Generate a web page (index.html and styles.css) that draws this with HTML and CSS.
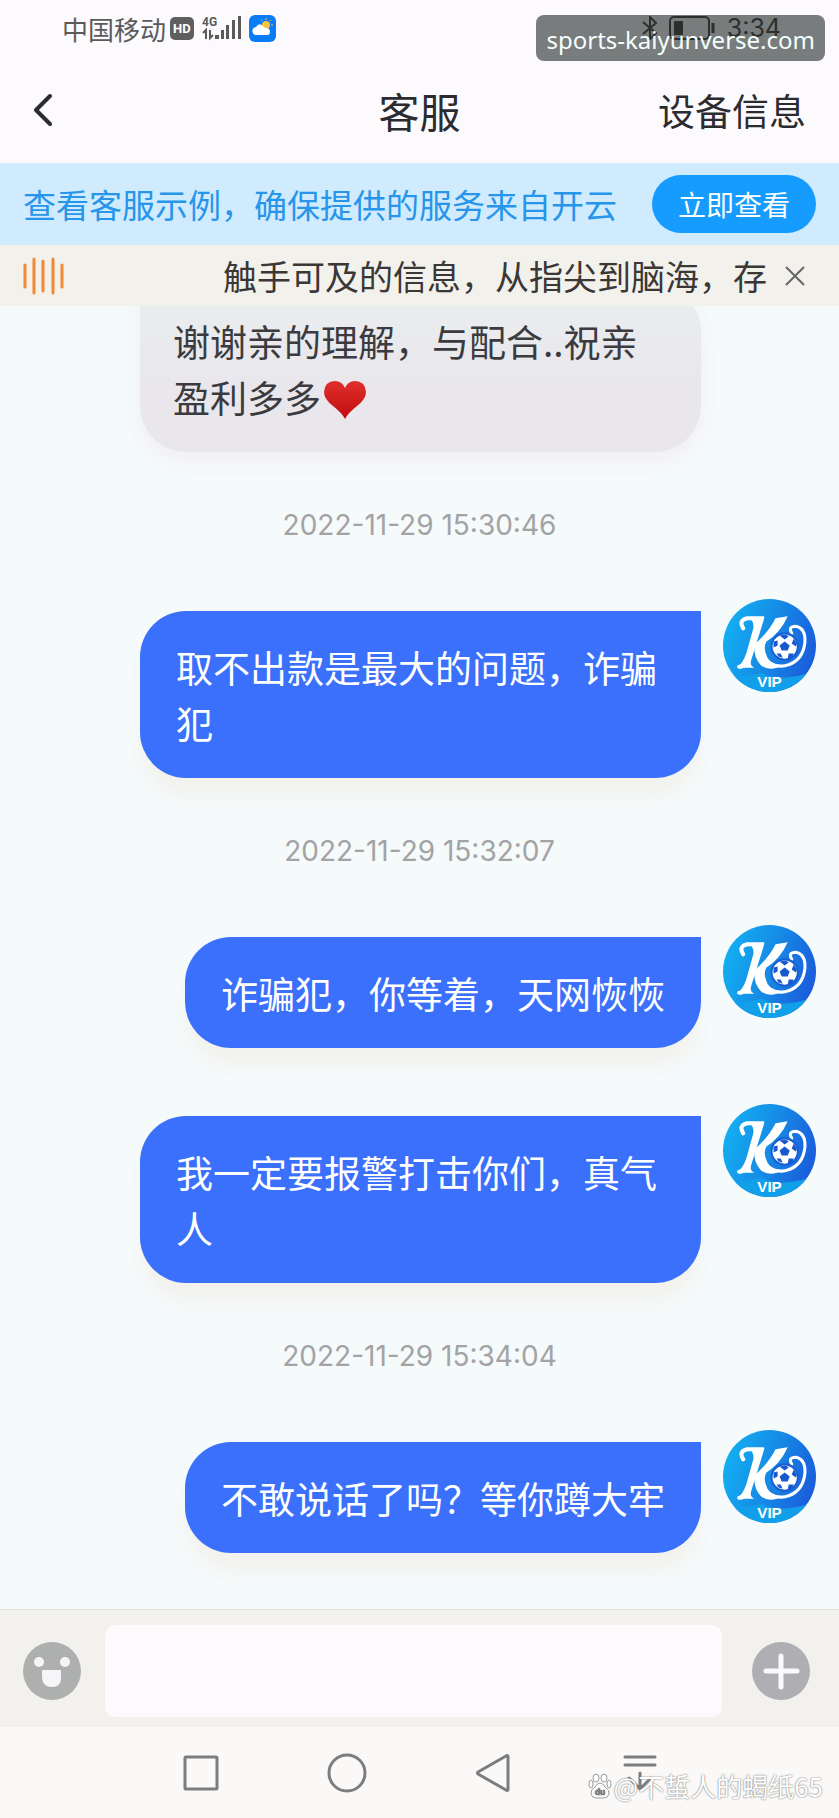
FILE: index.html
```html
<!DOCTYPE html>
<html lang="zh-CN">
<head>
    <meta charset="utf-8">
    <title>客服</title>
    <meta name="viewport" content="width=device-width, initial-scale=1">
    <link rel="stylesheet" href="styles.css">
</head>
<body>
    <!-- shared avatar, reused by every message -->
    <svg class="sprite" aria-hidden="true">
        <defs>
            <linearGradient id="disc" x1="0" y1="0.3" x2="1" y2="0.6">
                <stop offset="0" stop-color="#13b0f2"></stop>
                <stop offset="0.5" stop-color="#168be6"></stop>
                <stop offset="1" stop-color="#1a5bdb"></stop>
            </linearGradient>
            <clipPath id="disc-clip"><circle cx="46" cy="46" r="46"></circle></clipPath>
            <symbol id="avatar" viewBox="0 0 92 92">
                <circle cx="46" cy="46" r="46" fill="url(#disc)"></circle>
                <path d="M6 76Q22 78 38 73Q56 82 82 74V92H6Z" fill="#129fea" clip-path="url(#disc-clip)"></path>
                <path d="M20 29Q15 21 24 19L38 19Q32 37 27 53Q23 67 16 67" fill="none" stroke="#fff" stroke-width="4" stroke-linecap="round"></path>
                <path d="M26 18H41Q37 32 32 47L28 60Q26 66 31 68H14Q20 63 23 54L30 29Q31 23 26 18Z" fill="#fff"></path>
                <path d="M31 45Q45 33 52 19L64 17Q57 33 43 42Q39 48 44 58Q49 66 60 65Q46 73 37 65Q30 57 31 45Z" fill="#fff"></path>
                <path d="M68 34Q64 27 72 27Q82 29 81 43Q79 60 65 65Q56 69 46 63" fill="none" stroke="#fff" stroke-width="3" stroke-linecap="round"></path>
                <circle cx="61" cy="47" r="13" fill="#fff" stroke="#175fd2" stroke-width="2"></circle>
                <g fill="#1659cf">
                    <path d="M61 42l5 4-2 5h-6l-2-5z"></path>
                    <path d="M56 36l6-1 3 2-4 3zM70 39l3 5-1 3-4-3zM50 42l4-1 0 5-4 2zM53 54l4 0 2 4-4-1zM65 54l5 0-2 4-4 1z"></path>
                </g>
                <text x="46" y="87" class="vip">VIP</text>
            </symbol>
        </defs>
    </svg>

    <div class="statusbar">
        <span class="carrier">中国移动</span>
        <span class="hd">HD</span>
        <svg class="signal" width="39" height="26" viewBox="0 0 39 26">
            <text x="0" y="11" class="net">4G</text>
            <path d="M1 18l3-3v9M8 15v8l3-3" fill="none" stroke="#5a5a5a" stroke-width="2"></path>
            <path d="M13 20h4v4h-4zM19 15h3v9h-3zM24 10h3v14h-3zM30 5h3v19h-3zM36 1h3v23h-3z" fill="#5a5a5a"></path>
        </svg>
        <svg width="27" height="27" viewBox="0 0 27 27">
            <rect width="27" height="27" rx="6" fill="#0b7cf7"></rect>
            <circle cx="17" cy="10" r="4" fill="#fbc13d"></circle>
            <path d="M17 3v2M22 5l-1 1M24 10h-2M12 5l1 1" stroke="#fbc13d" stroke-width="1"></path>
            <path d="M8 20a4 4 0 0 1-1-8q3-5 7-1 1 2 3 2 4 0 4 4 0 3-3 3z" fill="#fff"></path>
        </svg>
        <div class="status-right">
            <svg width="18" height="24" viewBox="0 0 18 24" fill="none" stroke="#5a5a5a" stroke-width="2">
                <path d="M2 6l13 11-6 6V1l6 6L2 18"></path>
            </svg>
            <svg width="48" height="26" viewBox="0 0 48 26">
                <rect x="1" y="2" width="39" height="22" rx="4" fill="none" stroke="#5a5a5a" stroke-width="2"></rect>
                <rect x="5" y="6" width="9" height="14" rx="1" fill="#5a5a5a"></rect>
                <path d="M44 8v10" stroke="#5a5a5a" stroke-width="3"></path>
            </svg>
            <span class="clock">3:34</span>
        </div>
        <div class="site-tag">sports-kaiyunverse.com</div>
    </div>

    <header class="header">
        <button class="back" type="button" aria-label="返回">
            <svg width="20" height="34" viewBox="0 0 20 34">
                <path d="M17 3L3 17l14 14" fill="none" stroke="#2b2b30" stroke-width="4" stroke-linecap="round" stroke-linejoin="round"></path>
            </svg>
        </button>
        <h1>客服</h1>
        <a class="device" href="#">设备信息</a>
    </header>

    <div class="banner">
        <span>查看客服示例，确保提供的服务来自开云</span>
        <button type="button">立即查看</button>
    </div>

    <div class="notice">
        <svg width="41" height="38" viewBox="0 0 41 38" stroke="#f08a35" stroke-width="3" stroke-linecap="round">
            <path d="M2 8v22M11 2v34M20 4v30M30 2v34M39 8v22"></path>
        </svg>
        <p>触手可及的信息，从指尖到脑海，存</p>
        <button type="button" aria-label="关闭">
            <svg width="20" height="20" viewBox="0 0 20 20">
                <path d="M1 1l18 18M19 1L1 19" stroke="#666" stroke-width="2"></path>
            </svg>
        </button>
    </div>

    <main class="chat">
        <div class="message received">
            <p class="bubble">谢谢亲的理解，与配合..祝亲盈利多多<svg class="heart" width="42" height="38" viewBox="0 0 42 38">
                <defs>
                    <linearGradient id="red" x1="0" y1="0" x2="0" y2="1">
                        <stop offset="0" stop-color="#df2f2b"></stop>
                        <stop offset="1" stop-color="#c20c10"></stop>
                    </linearGradient>
                </defs>
                <path d="M21 38Q18 32 9 25 0 18 0 11 1 0 11 0 18 0 21 7 24 0 31 0 41 0 42 11 42 18 33 25 24 32 21 38Z" fill="url(#red)"></path>
            </svg></p>
        </div>

        <time>2022-11-29 15:30:46</time>
        <div class="message">
            <p class="bubble">取不出款是最大的问题，诈骗犯</p>
            <svg class="avatar"><use href="#avatar"></use></svg>
        </div>

        <time>2022-11-29 15:32:07</time>
        <div class="message">
            <p class="bubble">诈骗犯，你等着，天网恢恢</p>
            <svg class="avatar"><use href="#avatar"></use></svg>
        </div>
        <div class="message">
            <p class="bubble">我一定要报警打击你们，真气人</p>
            <svg class="avatar"><use href="#avatar"></use></svg>
        </div>

        <time>2022-11-29 15:34:04</time>
        <div class="message">
            <p class="bubble">不敢说话了吗？等你蹲大牢</p>
            <svg class="avatar"><use href="#avatar"></use></svg>
        </div>
    </main>

    <form class="composer">
        <button type="button" aria-label="表情">
            <svg width="58" height="58" viewBox="0 0 58 58">
                <circle cx="29" cy="29" r="29" fill="#aeb0b0"></circle>
                <circle cx="16" cy="20" r="5" fill="#f7f5f8"></circle>
                <circle cx="42" cy="20" r="5" fill="#f7f5f8"></circle>
                <path d="M19 28h19v8q0 9-9 9t-10-9z" fill="#f7f5f8"></path>
            </svg>
        </button>
        <input type="text" aria-label="消息">
        <button type="button" aria-label="更多">
            <svg width="58" height="58" viewBox="0 0 58 58">
                <circle cx="29" cy="29" r="29" fill="#aeaeb3"></circle>
                <path d="M29 14v31M14 29h31" stroke="#fbf9fd" stroke-width="5" stroke-linecap="round"></path>
            </svg>
        </button>
    </form>

    <nav class="navbar">
        <button type="button" aria-label="最近任务">
            <svg viewBox="0 0 40 40"><rect x="4" y="4" width="32" height="32" rx="1"></rect></svg>
        </button>
        <button type="button" aria-label="主页">
            <svg viewBox="0 0 40 40"><circle cx="20" cy="20" r="18"></circle></svg>
        </button>
        <button type="button" aria-label="后退">
            <svg viewBox="0 0 40 40"><path d="M35 3v34q-1 1-2 0L5 21q-1-1 0-2L33 3q1-1 2 0z"></path></svg>
        </button>
        <button type="button" aria-label="收起">
            <svg viewBox="0 0 40 40"><path d="M6 4h30M6 12h30M21 20v16M10 25l11 11 11-11"></path></svg>
        </button>
        <div class="watermark">
            <svg width="24" height="26" viewBox="0 0 24 26" fill="#fff" stroke="#9a9a9a" stroke-width="1">
                <ellipse cx="8" cy="5" rx="3" ry="4"></ellipse>
                <ellipse cx="16" cy="5" rx="3" ry="4"></ellipse>
                <ellipse cx="3" cy="11" rx="2" ry="4"></ellipse>
                <ellipse cx="21" cy="11" rx="2" ry="4"></ellipse>
                <path d="M12 10q3 0 5 4 5 3 4 7-1 4-5 4H8q-4 0-5-4-1-4 4-7 2-4 5-4z"></path>
                <text x="12" y="22" class="du">du</text>
            </svg>
            <span>@不蜇人的蝎纸65</span>
        </div>
    </nav>
</body>
</html>
```
FILE: styles.css
```css
* {
    box-sizing: border-box;
    margin: 0;
    padding: 0;
}

body {
    display: flex;
    flex-direction: column;
    height: 100vh;
    background-color: #fcfafd;
    color: #2b2b30;
    font-family: "Noto Sans CJK SC", sans-serif;
}

button {
    border: 0;
    background: none;
    font-family: inherit;
}

svg {
    display: block;
    flex: none;
}

.sprite {
    position: absolute;
    width: 0;
    height: 0;
}

/* status bar */
.statusbar {
    position: relative;
    display: flex;
    align-items: center;
    height: 56px;
    padding: 0 58px 0 62px;
    color: #5a5a5a;
}

.carrier {
    font-size: 26px;
}

.hd {
    margin: 0 8px 0 4px;
    padding: 0 3px;
    border-radius: 5px;
    background-color: #5f5f5f;
    color: #fff;
    font: bold 13px/23px Roboto, sans-serif;
}

.signal {
    margin-right: 8px;
}

.net {
    fill: #5a5a5a;
    font: bold 12px Roboto, sans-serif;
}

.status-right {
    display: flex;
    align-items: center;
    gap: 10px;
    margin-left: auto;
}

.clock {
    font: 25px/30px Inter, sans-serif;
}

.site-tag {
    position: absolute;
    top: 15px;
    right: 14px;
    padding: 3px 10px 0;
    border-radius: 8px;
    background-color: rgba(0, 8, 5, 0.52);
    color: #f4fffd;
    font: 24px/43px "Noto Sans", sans-serif;
}

/* title row */
.header {
    display: grid;
    grid-template-columns: 1fr auto 1fr;
    align-items: center;
    height: 107px;
    padding: 0 33px;
}

.back {
    justify-self: start;
}

.header h1 {
    font-size: 41px;
    font-weight: normal;
}

.device {
    justify-self: end;
    color: inherit;
    font-size: 37px;
    text-decoration: none;
}

.banner {
    display: flex;
    align-items: center;
    justify-content: space-between;
    padding: 12px 23px;
    background-color: #d0ebfe;
    color: #2795ea;
    font-size: 33px;
    line-height: 58px;
    white-space: nowrap;
}

.banner button {
    padding: 0 26px;
    border-radius: 29px;
    background-color: #169bfe;
    color: #fff;
    font-size: 28px;
    line-height: 58px;
}

.notice {
    display: flex;
    align-items: center;
    padding: 0 34px 0 23px;
    background-color: #f3f1ec;
    color: #3a3735;
}

.notice p {
    flex: 1;
    padding-right: 18px;
    font-size: 34px;
    line-height: 61px;
    text-align: right;
    white-space: nowrap;
}

/* conversation */
.chat {
    flex: 1;
    display: flex;
    flex-direction: column;
    justify-content: flex-end;
    gap: 56px;
    padding: 0 23px 56px;
    overflow: hidden;
    background-color: #f5fafb;
}

.chat time {
    color: #a3a3a5;
    font: 28px/35px Inter, sans-serif;
    text-align: center;
}

.message {
    display: flex;
    align-items: flex-start;
    justify-content: flex-end;
    gap: 22px;
}

.bubble {
    max-width: 561px;
    margin-top: 12px;
    padding: 28px 36px 27px;
    border-radius: 46px 0 46px 46px;
    background-color: #3a70fb;
    box-shadow: 0 20px 20px -4px #f2f1ec;
    color: #fff;
    font-size: 37px;
    line-height: 56px;
}

.received {
    justify-content: flex-start;
    padding-left: 117px;
}

.received .bubble {
    padding-left: 33px;
    border-radius: 0 46px 46px 46px;
    background: linear-gradient(#eaeeef, #e9e7ec 60%);
    box-shadow: 0 10px 20px #f2eff2;
    color: #3b3b3f;
}

.heart {
    display: inline-block;
    margin-left: 3px;
    vertical-align: -6px;
}

.avatar {
    width: 93px;
    height: 93px;
}

.vip {
    fill: #fff;
    font: bold 15px "Liberation Sans", sans-serif;
    text-anchor: middle;
}

/* input row */
.composer {
    display: flex;
    align-items: center;
    gap: 24px;
    padding: 15px 29px 10px 23px;
    border-top: 1px solid #e2e3dc;
    background-color: #f2f1ed;
}

.composer input {
    flex: 1;
    min-width: 0;
    height: 92px;
    margin-right: 6px;
    padding: 0 20px;
    border: 0;
    border-radius: 10px;
    background-color: #fcfafd;
    font: 37px "Noto Sans CJK SC", sans-serif;
}

.navbar {
    position: relative;
    display: flex;
    align-items: center;
    justify-content: center;
    gap: 106px;
    height: 91px;
    background-color: #fbf8f8;
}

.navbar button svg {
    width: 40px;
    height: 40px;
    fill: none;
    stroke: #7d7d7d;
    stroke-width: 3px;
    stroke-linecap: round;
    stroke-linejoin: round;
}

.watermark {
    position: absolute;
    right: 16px;
    bottom: 14px;
    display: flex;
    align-items: center;
    gap: 2px;
    color: #fff;
    font-size: 26px;
    line-height: 36px;
    text-shadow: 0 0 1px #777, 0 0 2px #999;
}

.du {
    fill: #777;
    stroke: none;
    font: bold 9px Roboto, sans-serif;
    text-anchor: middle;
}
```
